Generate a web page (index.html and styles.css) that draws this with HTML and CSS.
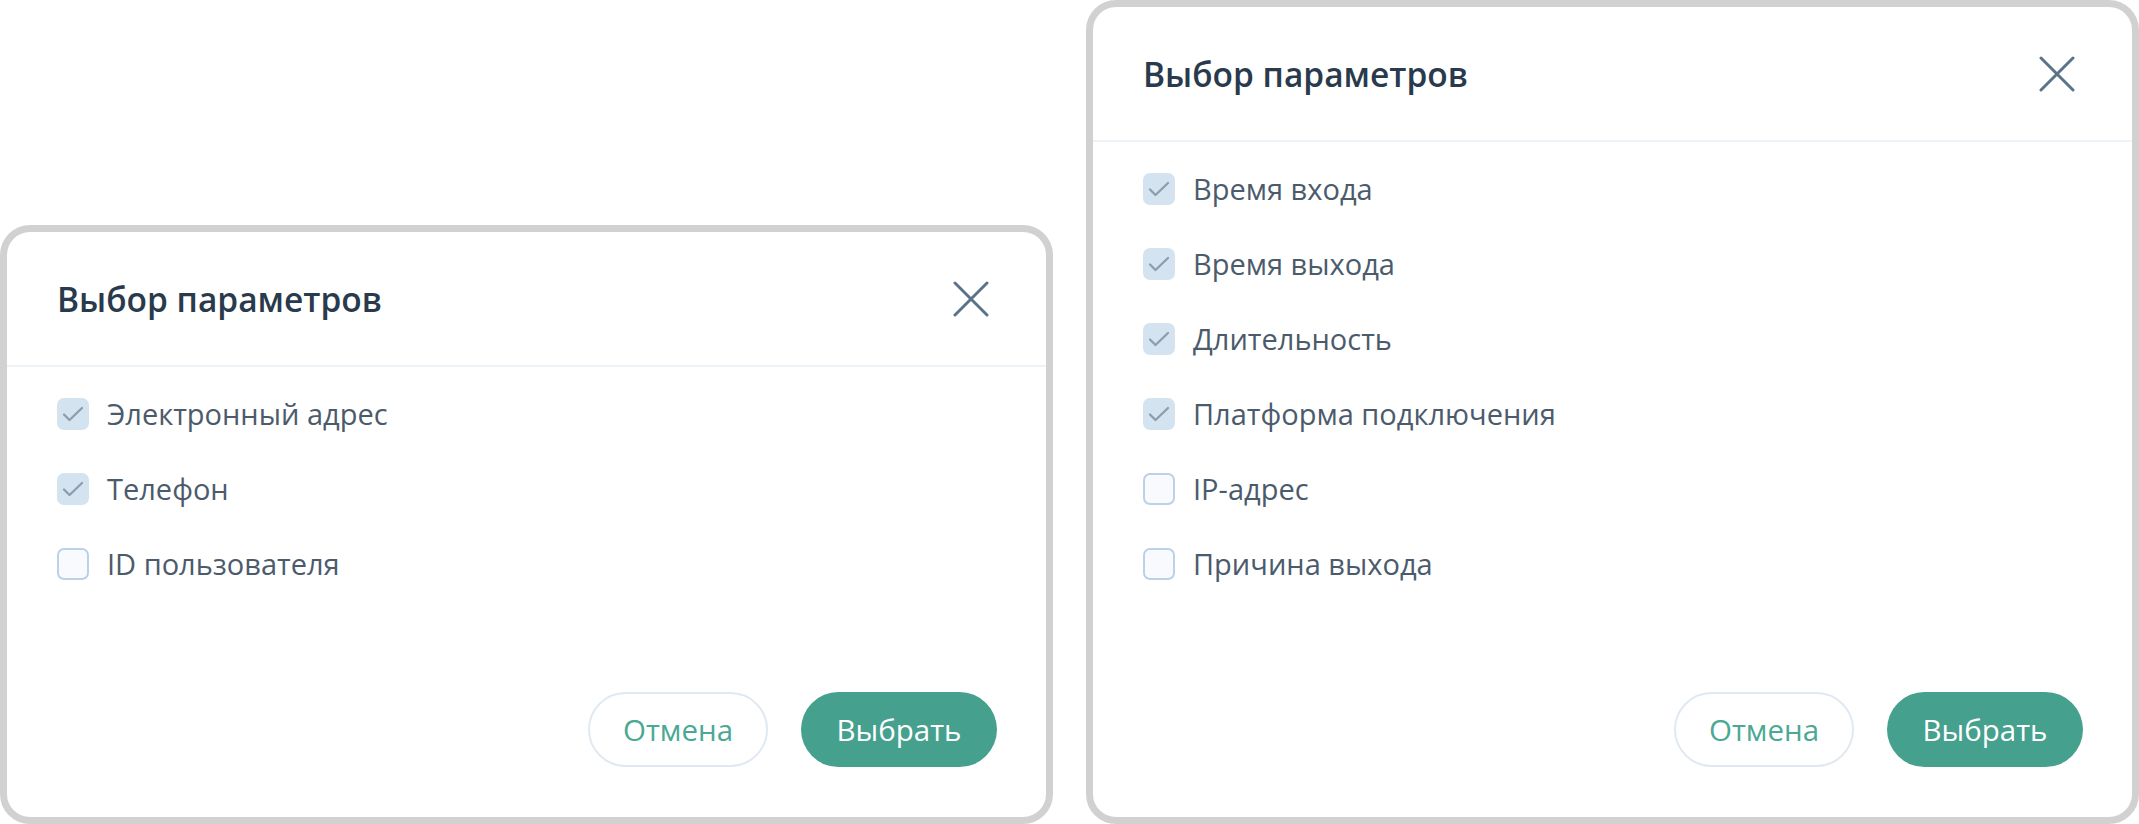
FILE: index.html
```html
<!DOCTYPE html>
<html lang="ru">
<head>
<meta charset="utf-8">
<title>Выбор параметров</title>
<link rel="stylesheet" href="styles.css">
</head>
<body>
<div class="stage">
  <section class="dialog">
    <header class="dlg-head">
      <h2 class="dlg-title">Выбор параметров</h2>
      <button class="dlg-close" aria-label="Закрыть">
        <svg viewBox="0 0 36 36" width="36" height="36"><path d="M2 2L34 34M34 2L2 34" stroke="#5b7389" stroke-width="3" stroke-linecap="round" fill="none"/></svg>
      </button>
    </header>
    <div class="dlg-body">
      <label class="opt"><span class="box checked"><svg viewBox="0 0 32 32" width="32" height="32"><path d="M7 16.5l5.5 5.5L25 10" stroke="#8d9dac" stroke-width="2.3" fill="none" stroke-linecap="round" stroke-linejoin="round"/></svg></span><span class="opt-text">Электронный адрес</span></label>
      <label class="opt"><span class="box checked"><svg viewBox="0 0 32 32" width="32" height="32"><path d="M7 16.5l5.5 5.5L25 10" stroke="#8d9dac" stroke-width="2.3" fill="none" stroke-linecap="round" stroke-linejoin="round"/></svg></span><span class="opt-text">Телефон</span></label>
      <label class="opt"><span class="box"></span><span class="opt-text">ID пользователя</span></label>
    </div>
    <footer class="dlg-foot">
      <button class="btn btn-ghost">Отмена</button>
      <button class="btn btn-primary">Выбрать</button>
    </footer>
  </section>

  <section class="dialog">
    <header class="dlg-head">
      <h2 class="dlg-title">Выбор параметров</h2>
      <button class="dlg-close" aria-label="Закрыть">
        <svg viewBox="0 0 36 36" width="36" height="36"><path d="M2 2L34 34M34 2L2 34" stroke="#5b7389" stroke-width="3" stroke-linecap="round" fill="none"/></svg>
      </button>
    </header>
    <div class="dlg-body">
      <label class="opt"><span class="box checked"><svg viewBox="0 0 32 32" width="32" height="32"><path d="M7 16.5l5.5 5.5L25 10" stroke="#8d9dac" stroke-width="2.3" fill="none" stroke-linecap="round" stroke-linejoin="round"/></svg></span><span class="opt-text">Время входа</span></label>
      <label class="opt"><span class="box checked"><svg viewBox="0 0 32 32" width="32" height="32"><path d="M7 16.5l5.5 5.5L25 10" stroke="#8d9dac" stroke-width="2.3" fill="none" stroke-linecap="round" stroke-linejoin="round"/></svg></span><span class="opt-text">Время выхода</span></label>
      <label class="opt"><span class="box checked"><svg viewBox="0 0 32 32" width="32" height="32"><path d="M7 16.5l5.5 5.5L25 10" stroke="#8d9dac" stroke-width="2.3" fill="none" stroke-linecap="round" stroke-linejoin="round"/></svg></span><span class="opt-text">Длительность</span></label>
      <label class="opt"><span class="box checked"><svg viewBox="0 0 32 32" width="32" height="32"><path d="M7 16.5l5.5 5.5L25 10" stroke="#8d9dac" stroke-width="2.3" fill="none" stroke-linecap="round" stroke-linejoin="round"/></svg></span><span class="opt-text">Платформа подключения</span></label>
      <label class="opt"><span class="box"></span><span class="opt-text">IP-адрес</span></label>
      <label class="opt"><span class="box"></span><span class="opt-text">Причина выхода</span></label>
    </div>
    <footer class="dlg-foot">
      <button class="btn btn-ghost">Отмена</button>
      <button class="btn btn-primary">Выбрать</button>
    </footer>
  </section>
</div>
</body>
</html>
```

FILE: styles.css
```css
* { box-sizing: border-box; }
html, body { margin: 0; padding: 0; background: #ffffff; }
body { font-family: "Open Sans", "Noto Sans", sans-serif; }

.stage {
  width: 2139px;
  height: 824px;
  display: flex;
  align-items: flex-end;
  gap: 33px;
  overflow: hidden;
}

.dialog {
  width: 1053px;
  flex: 0 0 1053px;
  background: #ffffff;
  border: 7px solid #d1d1d1;
  border-radius: 30px;
  display: flex;
  flex-direction: column;
}

.dlg-head {
  height: 135px;
  display: flex;
  align-items: center;
  justify-content: space-between;
  padding: 0 57px 0 50px;
  border-bottom: 2px solid #eef3f8;
}

.dlg-title {
  margin: 0;
  font-size: 33.5px;
  font-weight: 600;
  color: #2a3a4d;
  letter-spacing: 0;
}

.dlg-close {
  width: 36px;
  height: 36px;
  padding: 0;
  border: 0;
  background: transparent;
  display: flex;
}

.dlg-body {
  padding: 9px 51px 0 50px;
  display: flex;
  flex-direction: column;
}

.opt {
  height: 75px;
  display: flex;
  align-items: center;
  gap: 18px;
}

.box {
  width: 32px;
  height: 32px;
  border-radius: 7px;
  background: #f8fafd;
  border: 2px solid #bbd1e7;
  display: flex;
  align-items: center;
  justify-content: center;
  flex: 0 0 32px;
}

.box.checked {
  background: #d4e3f0;
  border-color: #d4e3f0;
}

.box svg { flex: 0 0 auto; }

.opt-text {
  font-size: 29px;
  color: #4b5b6c;
}

.dlg-foot {
  display: flex;
  justify-content: flex-end;
  gap: 33px;
  padding: 91px 49px 50px;
}

.btn {
  height: 75px;
  border-radius: 38px;
  font-family: "Open Sans", "Noto Sans", sans-serif;
  font-size: 29.5px;
  padding: 0 30px;
  cursor: pointer;
}

.btn-ghost {
  width: 180px;
  background: #ffffff;
  border: 2px solid #e0e9f2;
  color: #4aa894;
}

.btn-primary {
  width: 196px;
  background: #45a08e;
  border: 0;
  color: #ffffff;
}
```
